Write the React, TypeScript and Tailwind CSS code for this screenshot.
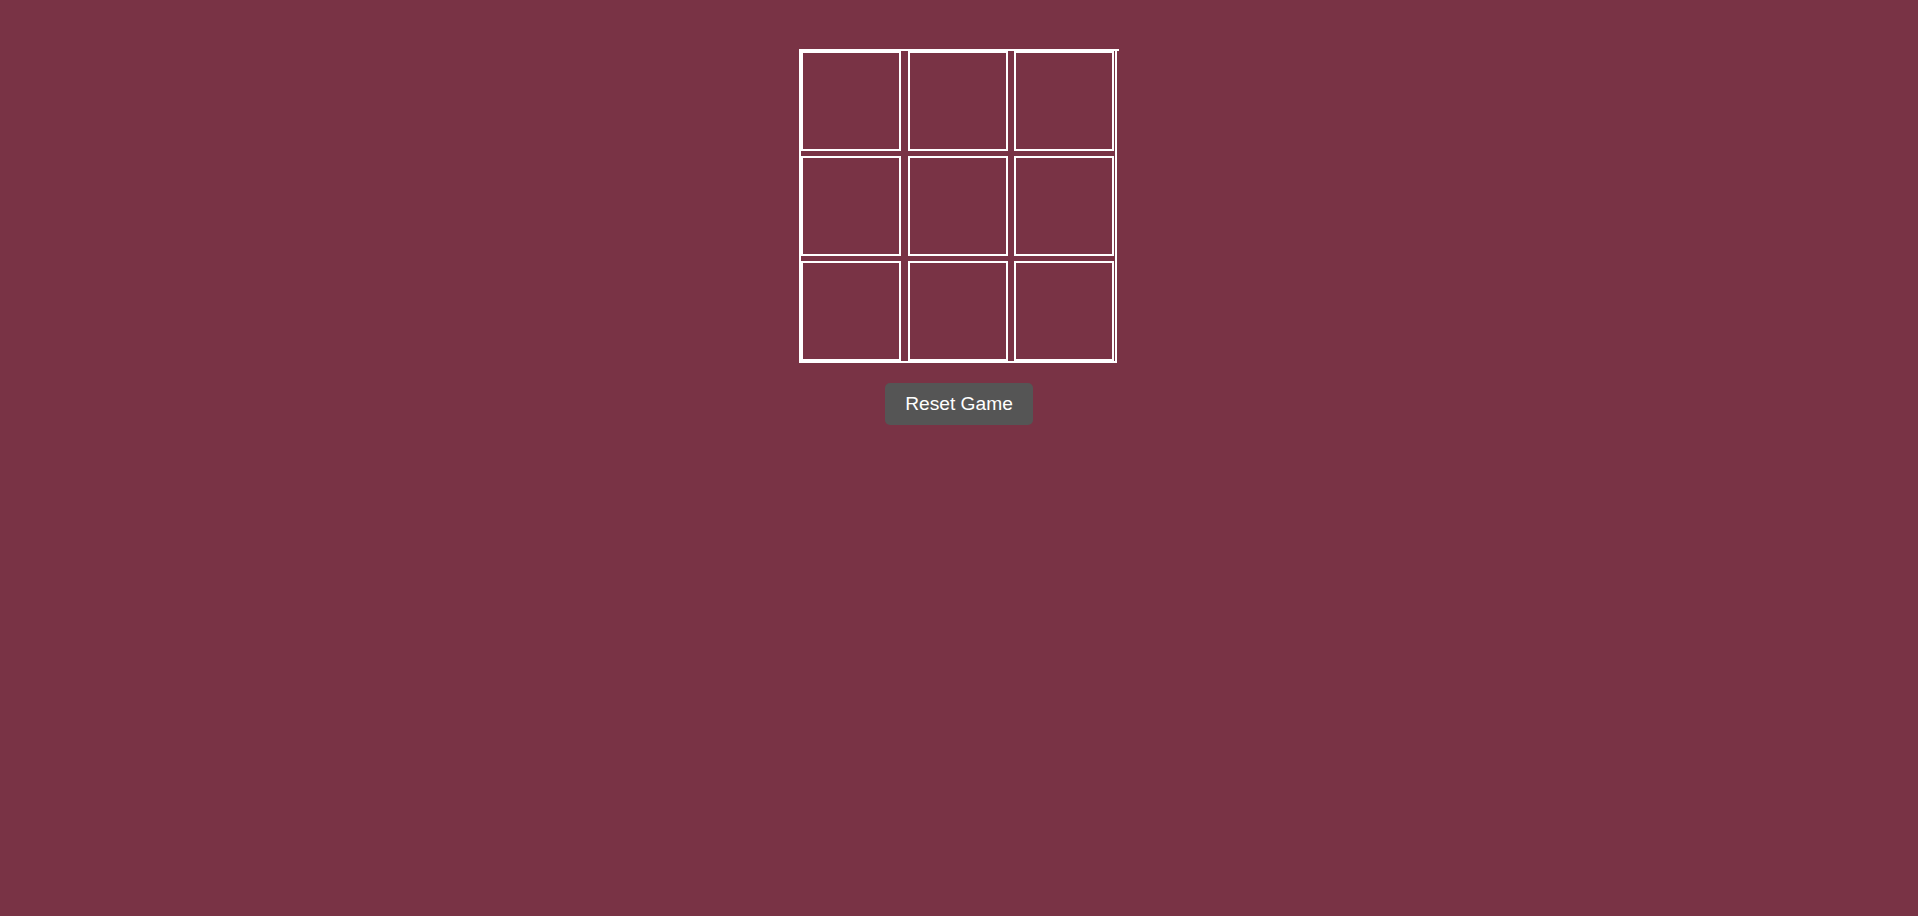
import React from "react";

export default function App() {
  const rows = [0, 1, 2];
  return (
    <div
      className="min-h-[916px] w-full bg-[#793345] flex flex-col items-center pt-[49px]"
      style={{ fontFamily: '"Liberation Sans", Arial, sans-serif' }}
    >
      <div className="relative w-[318px] ml-[-2px] border-2 border-white flex flex-col gap-[5px]">
        <span className="absolute top-[-2px] right-[-4px] w-[2px] h-[2px] bg-white" />
        {rows.map((r) => (
          <div key={r} className="flex gap-[6.5px]">
            {[0, 1, 2].map((c) => (
              <button
                key={c}
                className="w-[100px] h-[100px] shrink-0 border-2 border-white bg-transparent"
                aria-label={`cell ${r * 3 + c + 1}`}
              />
            ))}
          </div>
        ))}
      </div>
      <button className="mt-[20px] bg-[#555555] text-white text-[19.2px] leading-[22px] px-[20px] py-[10px] rounded-[5px]">
        Reset Game
      </button>
    </div>
  );
}
